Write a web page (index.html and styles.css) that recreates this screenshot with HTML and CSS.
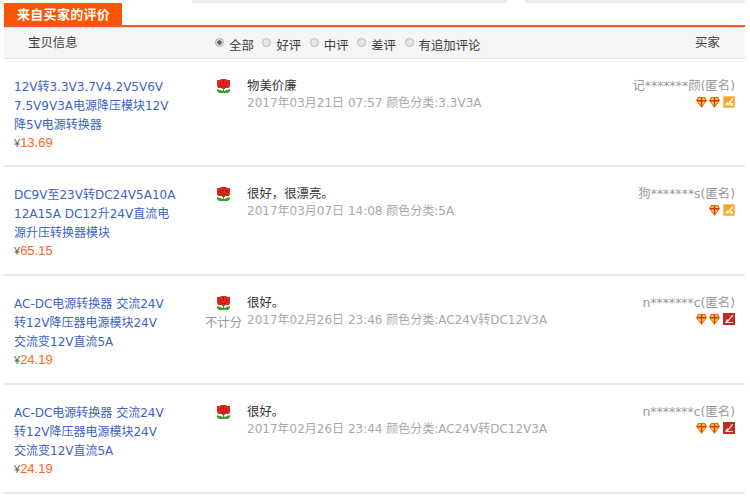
FILE: index.html
```html
<!DOCTYPE html>
<html lang="zh">
<head>
<meta charset="utf-8">
<title>来自买家的评价</title>
<link rel="stylesheet" href="styles.css">
</head>
<body>
<svg width="0" height="0" class="defs">
  <defs>
    <symbol id="flower" viewBox="0 0 13 14">
      <path fill="#3f9a35" d="M0 10l3 1 3 1V9h1v3l3-1 3-1v2l-2 2H2l-2-2z"/>
      <path fill="#6a6a3a" d="M5 8h3v2H5z"/>
      <path fill="#e0261c" d="M0 1h3l1-1h5l1 1h3v6l-1 2H1L0 7z"/>
      <path fill="#a81a14" d="M3 3h1v3H3zM6 1h1v4H6zM9 3h1v3H9zM4 7h5v1H4z"/>
    </symbol>
    <symbol id="gem" viewBox="0 0 11 11">
      <path fill="#e8660c" d="M2 0h7l2 3.500L5.500 11 0 3.500z"/>
      <path fill="#ffcf3a" d="M3 1h5l2 2.500-4.500 6-4.500-6z"/>
      <path fill="#d8340c" d="M1 3h9v1.500H1zM4.800 1h1.400v8H4.800z"/>
    </symbol>
    <symbol id="vip" viewBox="0 0 12 12">
      <rect width="12" height="12" fill="#fbc76a"/>
      <rect x="1" y="1" width="10" height="10" fill="#f7a428"/>
      <path fill="#fff3cf" d="M2 9l2-3 1 1 4-5h1v2L5 10 4 9 3 10zM7 7h3v3H7z"/>
    </symbol>
    <symbol id="vip-red" viewBox="0 0 12 12">
      <rect width="12" height="12" fill="#c42a1e"/>
      <path fill="#fde4dc" d="M2 10l2-4 1 1 4-5h1v1L5 9h5v1z"/>
    </symbol>
  </defs>
</svg>
<main class="page">
  <div class="topstrip"><span class="strip-gap"></span></div>
  <div class="tabbar"><h2 class="tab">来自买家的评价</h2></div>
  <div class="head">
    <div class="head-item">宝贝信息</div>
    <div class="filters">
      <label class="filter"><span class="radio radio-on"></span>全部</label>
      <label class="filter"><span class="radio"></span>好评</label>
      <label class="filter"><span class="radio"></span>中评</label>
      <label class="filter"><span class="radio"></span>差评</label>
      <label class="filter"><span class="radio"></span>有追加评论</label>
    </div>
    <div class="head-buyer">买家</div>
  </div>

  <article class="row">
    <div class="product">
      <a class="title">12V转3.3V3.7V4.2V5V6V<br>7.5V9V3A电源降压模块12V<br>降5V电源转换器</a>
      <div class="price"><span class="yen">¥</span>13.69</div>
    </div>
    <div class="rate"><svg class="flower"><use href="#flower"/></svg></div>
    <div class="comment">
      <p class="text">物美价廉</p>
      <p class="meta">2017年03月21日 07:57 颜色分类:3.3V3A</p>
    </div>
    <div class="buyer">
      <div class="name">记*******颜(匿名)</div>
      <div class="badges"><svg class="gem"><use href="#gem"/></svg><svg class="gem"><use href="#gem"/></svg><svg class="vip"><use href="#vip"/></svg></div>
    </div>
  </article>

  <article class="row">
    <div class="product">
      <a class="title">DC9V至23V转DC24V5A10A<br>12A15A DC12升24V直流电<br>源升压转换器模块</a>
      <div class="price"><span class="yen">¥</span>65.15</div>
    </div>
    <div class="rate"><svg class="flower"><use href="#flower"/></svg></div>
    <div class="comment">
      <p class="text">很好，很漂亮。</p>
      <p class="meta">2017年03月07日 14:08 颜色分类:5A</p>
    </div>
    <div class="buyer">
      <div class="name">狗*******s(匿名)</div>
      <div class="badges"><svg class="gem"><use href="#gem"/></svg><svg class="vip"><use href="#vip"/></svg></div>
    </div>
  </article>

  <article class="row">
    <div class="product">
      <a class="title">AC-DC电源转换器 交流24V<br>转12V降压器电源模块24V<br>交流变12V直流5A</a>
      <div class="price"><span class="yen">¥</span>24.19</div>
    </div>
    <div class="rate"><svg class="flower"><use href="#flower"/></svg><span class="nocount">不计分</span></div>
    <div class="comment">
      <p class="text">很好。</p>
      <p class="meta">2017年02月26日 23:46 颜色分类:AC24V转DC12V3A</p>
    </div>
    <div class="buyer">
      <div class="name">n*******c(匿名)</div>
      <div class="badges"><svg class="gem"><use href="#gem"/></svg><svg class="gem"><use href="#gem"/></svg><svg class="vip"><use href="#vip-red"/></svg></div>
    </div>
  </article>

  <article class="row">
    <div class="product">
      <a class="title">AC-DC电源转换器 交流24V<br>转12V降压器电源模块24V<br>交流变12V直流5A</a>
      <div class="price"><span class="yen">¥</span>24.19</div>
    </div>
    <div class="rate"><svg class="flower"><use href="#flower"/></svg></div>
    <div class="comment">
      <p class="text">很好。</p>
      <p class="meta">2017年02月26日 23:44 颜色分类:AC24V转DC12V3A</p>
    </div>
    <div class="buyer">
      <div class="name">n*******c(匿名)</div>
      <div class="badges"><svg class="gem"><use href="#gem"/></svg><svg class="gem"><use href="#gem"/></svg><svg class="vip"><use href="#vip-red"/></svg></div>
    </div>
  </article>
</main>
</body>
</html>
```
FILE: styles.css
```css
* { box-sizing: border-box; }
html, body { margin: 0; padding: 0; background: #fff; }
body {
  font-family: "DejaVu Sans", "Noto Sans CJK SC", sans-serif;
  font-size: 12.4px;
  color: #3c3c3c;
  overflow: hidden;
}
.defs { position: absolute; }
.page { width: 745px; padding-left: 4px; }

.topstrip {
  height: 3px;
  margin-left: 188px;
  background: #ededed;
  position: relative;
}
.strip-gap {
  position: absolute;
  left: 315px;
  top: 0;
  width: 18px;
  height: 3px;
  background: #fff;
}

.tabbar {
  height: 24px;
  border-bottom: 2px solid #e2622c;
}
.tab {
  margin: 0;
  width: 118px;
  height: 22px;
  background: #ff5500;
  color: #fff;
  font-family: "Noto Sans CJK SC", sans-serif;
  font-size: 13px;
  font-weight: 700;
  line-height: 22px;
  padding-left: 13px;
  letter-spacing: 0.3px;
}

.head {
  display: flex;
  align-items: center;
  height: 32px;
  background: #f5f5f5;
  border-top: 1px solid #ddd;
  border-bottom: 1px solid #e3e3e3;
}
.head-item { width: 211px; padding-left: 24px; padding-bottom: 2px; }
.filters { display: flex; flex: 1; gap: 8.600px; padding-top: 3px; }
.filter { display: flex; align-items: center; gap: 5px; }
.radio {
  width: 9px;
  height: 9px;
  border-radius: 50%;
  background: #e6e6e6;
  border: 1px solid #bbb;
  margin-top: -4px;
}
.radio-on { background: radial-gradient(circle, #666 0 2px, #e6e6e6 2.5px); border-color: #aaa; }
.head-buyer { width: 50px; padding-bottom: 2px; }

.row {
  display: flex;
  height: 109px;
  border-bottom: 2px solid #e8e8e8;
  padding-top: 17px;
}
.row:nth-of-type(1) { height: 108px; }

.product { flex: none; width: 201px; padding-left: 10px; }
.title { display: block; color: #3d63c6; font-size: 12px; line-height: 19px; white-space: nowrap; padding-top: 2px; }
.price { color: #ff6622; line-height: 19px; font-family: "Liberation Sans", sans-serif; font-size: 13px; margin-top: -2px; }
.yen { color: #6e5a3a; font-size: 11px; }

.rate { flex: none; width: 37px; display: flex; flex-direction: column; align-items: center; padding-top: 3px; }
.flower { width: 13px; height: 14px; display: block; }
.nocount { color: #999; margin-top: 3px; white-space: nowrap; }

.comment { flex: 1; min-width: 0; padding-left: 5px; }
.text { margin: 0; line-height: 19px; color: #333; }
.meta { margin: 0; font-size: 12px; line-height: 17px; color: #a8a8a8; white-space: nowrap; }

.buyer { flex: none; width: 200px; padding-right: 10px; text-align: right; }
.name { line-height: 19px; color: #999; white-space: nowrap; }
.badges { display: flex; justify-content: flex-end; align-items: center; gap: 2px; margin-top: 1px; height: 12px; }
.gem { width: 11px; height: 11px; }
.vip { width: 12px; height: 12px; margin-left: 1px; }
```
